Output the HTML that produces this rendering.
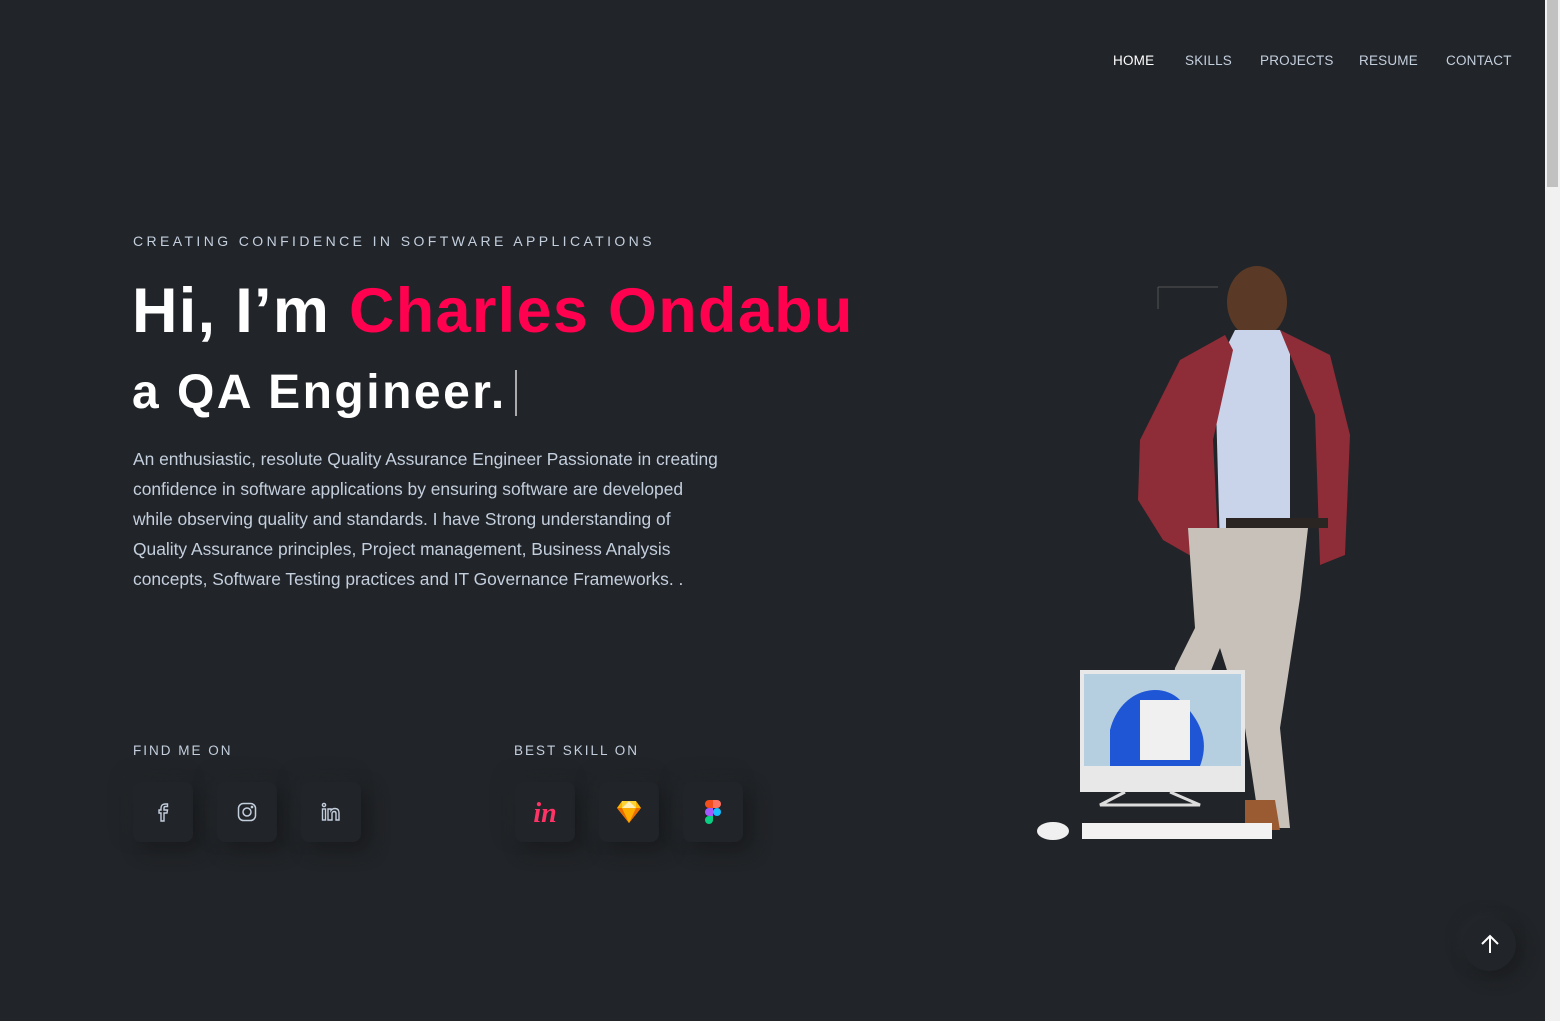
<!DOCTYPE html>
<html><head><meta charset="utf-8"><style>
*{margin:0;padding:0;box-sizing:border-box}
body{width:1560px;height:1021px;background:#212428;font-family:"Liberation Sans",sans-serif;overflow:hidden;position:relative;color:#c4cfde}
.nav{position:absolute;top:53px;font-size:13.5px;color:#c4cfde;letter-spacing:.2px}
.sb{position:absolute;left:1545px;top:0;width:15px;height:1021px;background:#f1f1f1}
.sb div{position:absolute;left:2px;top:0;width:11px;height:187px;background:#c1c1c1}
.t{position:absolute;white-space:nowrap}
.box{position:absolute;top:782px;width:60px;height:60px;border-radius:8px;background:#212428;box-shadow:8px 8px 18px #191b1e,-6px -6px 16px #23272b;display:flex;align-items:center;justify-content:center}
.up{position:absolute;left:1463px;top:918px;width:53px;height:53px;border-radius:50%;background:#212428;box-shadow:6px 6px 16px #1a1c1f,-4px -4px 12px #262a2e}
</style></head><body>
<div class="nav" style="left:1113px;color:#fff">HOME</div>
<div class="nav" style="left:1185px">SKILLS</div>
<div class="nav" style="left:1260px">PROJECTS</div>
<div class="nav" style="left:1359px">RESUME</div>
<div class="nav" style="left:1446px">CONTACT</div>

<div class="t" style="left:133px;top:233px;font-size:14px;letter-spacing:3.4px;color:#c4cfde">CREATING CONFIDENCE IN SOFTWARE APPLICATIONS</div>
<div class="t" style="left:132px;top:275px;font-size:63px;font-weight:bold;color:#fff;letter-spacing:1.3px">Hi, I’m <span style="color:#ff014f">Charles Ondabu</span></div>
<div class="t" style="left:132px;top:365px;font-size:48px;font-weight:bold;color:#fff;letter-spacing:2.5px">a QA Engineer.<span style="display:inline-block;width:2px;height:46px;background:#aaa;margin-left:8px;vertical-align:-8px"></span></div>
<div class="t" style="left:133px;top:444px;font-size:17.4px;line-height:30px;color:#c4cfde;white-space:normal;width:585px">An enthusiastic, resolute Quality Assurance Engineer Passionate in creating confidence in software applications by ensuring software are developed while observing quality and standards. I have Strong understanding of Quality Assurance principles, Project management, Business Analysis concepts, Software Testing practices and IT Governance Frameworks. .</div>

<div class="t" style="left:133px;top:743px;font-size:13.5px;letter-spacing:2px">FIND ME ON</div>
<div class="t" style="left:514px;top:743px;font-size:13.5px;letter-spacing:2px">BEST SKILL ON</div>

<div class="box" style="left:133px"><svg width="18" height="20" viewBox="0 0 18 20" fill="none" stroke="#c4cfde" stroke-width="1.4"><path d="M10 19V11h3l.5-3H10V6c0-1 .5-1.5 1.5-1.5H13.5V2H11C8.5 2 7 3.5 7 6v2H5v3h2v8z"/></svg></div>
<div class="box" style="left:217px"><svg width="20" height="20" viewBox="0 0 20 20" fill="none" stroke="#c4cfde" stroke-width="1.5"><rect x="1.5" y="1.5" width="17" height="17" rx="5"/><circle cx="10" cy="10" r="4"/><circle cx="15" cy="5" r=".6" fill="#c4cfde"/></svg></div>
<div class="box" style="left:301px"><svg width="20" height="20" viewBox="0 0 20 20" fill="none" stroke="#c4cfde" stroke-width="1.4"><circle cx="3" cy="3" r="1.6"/><rect x="1.5" y="7" width="3" height="11"/><path d="M7 18V7h3v1.5c1-1.5 2.5-2 4-2 2.5 0 4 1.5 4 4.5V18h-3v-6.5c0-1.300-.7-2-1.8-2S11 10.2 11 11.5V18z"/></svg></div>

<div class="box" style="left:515px"><span style="color:#ff3366;font-family:'Liberation Serif',serif;font-style:italic;font-weight:bold;font-size:28px;margin-top:4px">in</span></div>
<div class="box" style="left:599px"><svg width="26" height="24" viewBox="0 0 26 24"><path d="M6 1h14l5 7-12 15L1 8z" fill="#fdb300"/><path d="M1 8h24L13 23z" fill="#ea6c00"/><path d="M6 8h14l-7 15z" fill="#fdad00"/><path d="M6 1 13 1 6 8zM20 1 13 1 20 8z" fill="#fdd231"/><path d="M6 8 13 1 20 8z" fill="#feeeb7"/></svg></div>
<div class="box" style="left:683px"><svg width="16" height="24" viewBox="0 0 16 24"><path d="M4 0h4v8H4a4 4 0 010-8z" fill="#f24e1e"/><path d="M8 0h4a4 4 0 010 8H8z" fill="#ff7262"/><path d="M4 8h4v8H4a4 4 0 010-8z" fill="#a259ff"/><circle cx="12" cy="12" r="4" fill="#1abcfe"/><path d="M4 16h4v4a4 4 0 11-4-4z" fill="#0acf83"/></svg></div>

<svg class="t" style="left:1030px;top:260px" width="340" height="590" viewBox="0 0 340 590">
<path d="M128 27h60M128 27v22" stroke="#555" fill="none"/>
<ellipse cx="227" cy="42" rx="30" ry="36" fill="#5a3a26"/>
<path d="M205 70h45l10 20v200h-70l-5-180z" fill="#c9d3ea"/>
<path d="M195 75l-45 25-40 80-2 60 25 40 35 20 20-20-5-100 20-90zM250 70l50 25 20 80-5 120-25 10-5-150z" fill="#8e2c37"/>
<rect x="196" y="258" width="102" height="10" fill="#2a2522"/>
<path d="M158 268h120l-8 70-20 130 10 100-30 0-15-100-25-80-20 50-30 10 5-40 20-40z" fill="#c8c1b9"/>
<path d="M160 430l15 20-20 40-25 5 0-20z" fill="#9a5a32"/>
<path d="M215 540h30l5 30-35 0z" fill="#9a5a32"/>
<rect x="50" y="410" width="165" height="122" fill="#e8e8e8"/>
<rect x="54" y="414" width="157" height="92" fill="#b6cfe0"/>
<path d="M80 470c10-40 50-50 70-30 20 20 30 40 20 66H80z" fill="#1f56d6"/>
<rect x="110" y="440" width="50" height="60" fill="#f0f0f0"/>
<path d="M95 532 70 545h100l-30-13" stroke="#ddd" stroke-width="3" fill="none"/>
<rect x="52" y="563" width="190" height="16" fill="#f2f2f2"/>
<ellipse cx="23" cy="571" rx="16" ry="9" fill="#f0f0f0"/>
</svg>

<div class="up"><svg style="position:absolute;left:17px;top:16px" width="20" height="20" viewBox="0 0 20 20" fill="none" stroke="#fff" stroke-width="2"><path d="M10 19V2M2 10l8-8 8 8"/></svg></div>
<div class="sb"><div></div></div>
</body></html>
